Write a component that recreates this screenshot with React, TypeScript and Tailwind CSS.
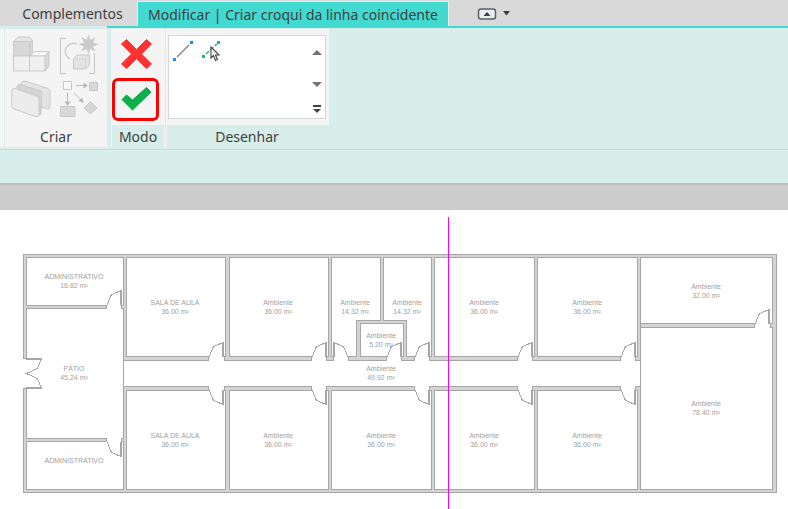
import type { ReactNode } from 'react';

type Box = [x: number, y: number, w: number, h: number];

const WALLS: Box[] = [
  // outer shell
  [23, 254, 754, 4],
  [23, 489, 754, 4],
  [23, 254, 4, 105],
  [23, 388, 4, 105],
  [772, 254, 5, 239],
  // administrativo
  [23, 305, 84, 4],
  [121, 305, 6, 4],
  [23, 438, 84, 4],
  [121, 438, 6, 4],
  // corridor, upper side
  [123, 356, 86, 5],
  [224, 356, 88, 5],
  [326, 356, 8, 5],
  [348, 356, 39, 5],
  [401, 356, 14, 5],
  [429, 356, 89, 5],
  [532, 356, 89, 5],
  [635, 356, 6, 5],
  // corridor, lower side
  [123, 386, 86, 5],
  [224, 386, 88, 5],
  [326, 386, 89, 5],
  [429, 386, 89, 5],
  [532, 386, 89, 5],
  [635, 386, 6, 5],
  // upper partitions
  [123, 254, 4, 107],
  [225, 254, 5, 107],
  [328, 254, 4, 107],
  [380, 254, 4, 70],
  [356, 320, 51, 4],
  [356, 320, 5, 41],
  [403, 320, 4, 41],
  [431, 254, 4, 107],
  [534, 254, 4, 107],
  [637, 254, 4, 107],
  // lower partitions
  [123, 386, 4, 107],
  [225, 386, 5, 107],
  [328, 386, 4, 107],
  [431, 386, 4, 107],
  [534, 386, 4, 107],
  [637, 386, 4, 107],
  // east rooms
  [640, 323, 115, 5],
  [770, 323, 7, 5],
];

interface DoorSpec {
  x: number;
  y: number;
  down?: boolean;
  mirror?: boolean;
}

const DOORS: DoorSpec[] = [
  { x: 107, y: 305 },
  { x: 107, y: 442, down: true },
  { x: 209, y: 357 },
  { x: 312, y: 357 },
  { x: 348, y: 357, mirror: true },
  { x: 387, y: 357 },
  { x: 415, y: 357 },
  { x: 518, y: 357 },
  { x: 621, y: 357 },
  { x: 755, y: 324 },
  { x: 209, y: 390, down: true },
  { x: 312, y: 390, down: true },
  { x: 415, y: 390, down: true },
  { x: 518, y: 390, down: true },
  { x: 621, y: 390, down: true },
];

const ROOMS: { x: number; y: number; name: string; area?: string }[] = [
  { x: 74, y: 279, name: 'ADMINISTRATIVO', area: '16.82 m²' },
  { x: 175, y: 305, name: 'SALA DE AULA', area: '36.00 m²' },
  { x: 278, y: 305, name: 'Ambiente', area: '36.00 m²' },
  { x: 355, y: 305, name: 'Ambiente', area: '14.32 m²' },
  { x: 407, y: 305, name: 'Ambiente', area: '14.32 m²' },
  { x: 484, y: 305, name: 'Ambiente', area: '36.00 m²' },
  { x: 587, y: 305, name: 'Ambiente', area: '36.00 m²' },
  { x: 706, y: 289, name: 'Ambiente', area: '32.00 m²' },
  { x: 381, y: 338, name: 'Ambiente', area: '5.20 m²' },
  { x: 381, y: 371, name: 'Ambiente', area: '49.92 m²' },
  { x: 74, y: 371, name: 'PÁTIO', area: '45.24 m²' },
  { x: 706, y: 406, name: 'Ambiente', area: '78.40 m²' },
  { x: 175, y: 438, name: 'SALA DE AULA', area: '36.00 m²' },
  { x: 278, y: 438, name: 'Ambiente', area: '36.00 m²' },
  { x: 381, y: 438, name: 'Ambiente', area: '36.00 m²' },
  { x: 484, y: 438, name: 'Ambiente', area: '36.00 m²' },
  { x: 587, y: 438, name: 'Ambiente', area: '36.00 m²' },
  { x: 74, y: 463, name: 'ADMINISTRATIVO' },
];

function Door({ x, y, down, mirror }: DoorSpec) {
  return (
    <g transform={`translate(${x} ${y}) scale(${mirror ? -1 : 1} ${down ? -1 : 1})`}>
      <path d="M0.5 0 L1.5 -4 L4.5 -10.5 L14 -14.5" fill="none" stroke="#a6a6a6" />
      <rect x="13" y="-15" width="2" height="15" fill="#a6a6a6" />
    </g>
  );
}

function FloorPlan() {
  return (
    <svg viewBox="0 210 788 299" className="block w-full" role="img" aria-label="Planta baixa">
      <g shapeRendering="crispEdges">
        {WALLS.map(([x, y, w, h], i) => (
          <rect key={i} x={x} y={y} width={w} height={h} fill="#a6a6a6" />
        ))}
        {WALLS.map(([x, y, w, h], i) => (
          <rect key={i} x={x + 1} y={y + 1} width={w - 2} height={h - 2} fill="#d4d4d4" />
        ))}
        <path d="M123.5 361V386M640.5 361V386" stroke="#a6a6a6" />
        {DOORS.map((d) => (
          <Door key={`${d.x}-${d.y}`} {...d} />
        ))}
        {/* entrance, double leaf */}
        <path d="M26 359H42M26 388H42" stroke="#a6a6a6" strokeWidth="2" />
        <path d="M41 360L37.5 368.5L26.5 373.5L37.5 378.5L41 387" fill="none" stroke="#a6a6a6" />
      </g>
      <g fill="#a0a0a0" fontSize="7" textAnchor="middle" fontFamily="'Liberation Sans', Arial, sans-serif">
        {ROOMS.map((r) => (
          <text key={`${r.x}-${r.y}`} x={r.x} y={r.y}>
            {r.name}
            {r.area && (
              <tspan x={r.x} dy="9">
                {r.area}
              </tspan>
            )}
          </text>
        ))}
      </g>
      <path d="M448.5 217V509" stroke="#ff00ff" shapeRendering="crispEdges" />
    </svg>
  );
}

function SolidIcon() {
  return (
    <svg width="40" height="40" viewBox="0 0 40 40" stroke="#cbcbcb" strokeLinejoin="round">
      <path d="M2.5 7.5L7 3H18.5L21.5 7L18.5 9Z" fill="#e4e4e4" />
      <path d="M18.5 8L21.5 7V18L18.5 22Z" fill="#d6d6d6" />
      <path d="M2.5 7.5H18.5V22H2.5Z" fill="#d8d8d8" />
      <path d="M18.5 22L24 17.5H38L34 22Z" fill="#f6f6f6" />
      <path d="M34 22L38 17.5V32L34 37Z" fill="#dadada" />
      <path d="M2.5 22H18.5V37H2.5ZM18.5 22H34V37H18.5Z" fill="#f0f0f0" />
    </svg>
  );
}

function ComponentIcon() {
  return (
    <svg width="40" height="40" viewBox="0 0 40 40" fill="none">
      <path d="M7 4.5H1.5V39.5H7" stroke="#c4c4c4" />
      <path d="M35.5 19V39.5H30" stroke="#c4c4c4" />
      <path d="M18 10A8 8 0 1 0 11 25" stroke="#d0d0d0" strokeWidth="1.5" />
      <path
        d="M29.5 0L31.3 5.8L36.5 3L34 8.4L39.5 10.3L34 12.4L36.8 17.5L31.4 15L29.5 20.5L27.6 15L22 17.5L25 12.4L19.5 10.3L25 8.4L22.4 3L27.7 5.8Z"
        fill="#cbcbcb"
      />
      <path d="M14.5 25L18 21H30.5V31L26.5 35H14.5Z" fill="#e4e4e4" stroke="#cacaca" strokeLinejoin="round" />
      <path d="M14.5 25H26.5V35M26.5 25L30.5 21" stroke="#d6d6d6" />
    </svg>
  );
}

function ViewsIcon() {
  return (
    <svg width="40" height="40" viewBox="0 0 40 40" stroke="#cacaca" strokeLinejoin="round">
      <path d="M10.5 5Q11 2.5 14 3L37 10.5Q39 11.5 39 13.5V29Q38.5 31.5 36 31L10.5 22Z" fill="#e4e4e4" />
      <path d="M5.5 9L8 6L31 13.500L30 36L27.500 37Z" fill="#d4d4d4" />
      <path d="M12 8V12M18 10V14M24 12V16M30 17H35V31" fill="none" stroke="#dedede" />
      <path d="M0.800 13Q1 10 4 10.500L25.500 18Q28 19 28 21V37Q27.500 39.500 25 38.700L3 31Q0.800 30 0.800 28Z" fill="#ececec" />
    </svg>
  );
}

function GroupIcon() {
  return (
    <svg width="40" height="40" viewBox="0 0 40 40">
      <path d="M4.500 3.500H12.500V11.500H4.500Z" fill="#f8f8f8" stroke="#c8c8c8" />
      <path d="M30.500 4.500H38.500V12.500H30.500ZM1.500 28.500H16V38.500H1.500Z" fill="#d8d8d8" stroke="#c8c8c8" />
      <path d="M31.500 23.500L38 30L31.500 36L25 30Z" fill="#d6d6d6" stroke="#cacaca" />
      <path d="M17 7.500H26M8.500 15V25M15 15L22 22" stroke="#bcbcbc" />
      <path d="M24.500 4.500L29 7.500L24.500 10.500ZM5.500 23.500H11.500L8.500 28ZM25 25L19.500 23L23 19.500Z" fill="#b8b8b8" />
    </svg>
  );
}

function IconButton({ label, className = '', children }: { label: string; className?: string; children: ReactNode }) {
  return (
    <button type="button" aria-label={label} className={`flex items-center justify-center ${className}`}>
      {children}
    </button>
  );
}

function CreatePanel() {
  return (
    <section className="ml-1 flex w-[103px] flex-col border-l border-[#d8eeeb] bg-[#f4f4f4]">
      <div className="grid grid-cols-[40px_40px] gap-x-2 gap-y-1 px-1.5 pt-[5px]">
        <IconButton label="Modelo"><SolidIcon /></IconButton>
        <IconButton label="Componente"><ComponentIcon /></IconButton>
        <IconButton label="Peças"><ViewsIcon /></IconButton>
        <IconButton label="Grupo"><GroupIcon /></IconButton>
      </div>
      <h2 className="mt-auto h-[22px] text-center leading-6">Criar</h2>
    </section>
  );
}

function ModePanel() {
  return (
    <section className="ml-1 flex w-[54px] flex-col border-x border-[#f4f4f4]">
      <div className="flex flex-1 flex-col bg-[#f4f4f4]">
        <IconButton label="Cancelar" className="h-[49px] w-[47px] pt-px pl-0.5">
          <svg width="31" height="32" viewBox="0 0 31 32">
            <path
              d="M5.500 1.500L15.500 11.500L25.500 1.500L30.500 6L20.500 16L30.500 26L25.500 30.500L15.500 20.500L5.500 30.500L0.500 26L10.500 16L0.500 6Z"
              fill="#ff3131"
              stroke="#f63030"
            />
          </svg>
        </IconButton>
        <IconButton label="Concluir" className="h-[43px] w-[47px] rounded-md border-3 border-[#ff0000] pl-0.5">
          <svg width="31" height="27" viewBox="0 0 31 27">
            <path d="M1 13.500L5.500 9L11.500 14L25.500 1.500L30 6L11.500 24Z" fill="#0bb04c" stroke="#0aa848" />
          </svg>
        </IconButton>
      </div>
      <h2 className="h-[22px] text-center leading-6">Modo</h2>
    </section>
  );
}

function DrawPanel() {
  return (
    <section className="ml-px flex w-[163px] flex-col border-l border-[#f4f4f4]">
      <div className="flex-1 bg-[#f4f4f4] px-px pt-1.5">
        <div className="flex h-[84px] w-[158px] border border-[#d6d6d6] bg-white">
          <div className="flex flex-1 items-start gap-1.5 px-1 pt-1">
            <IconButton label="Linha">
              <svg width="22" height="22" viewBox="0 0 22 22">
                <path d="M4 17L16 5" stroke="#858585" strokeWidth="1.500" />
                <path d="M0 18H3V21H0ZM17 1H20V4H17Z" fill="#1590e8" />
              </svg>
            </IconButton>
            <IconButton label="Selecionar linhas">
              <svg width="22" height="22" viewBox="0 0 22 22">
                <path d="M5 14L16 4" stroke="#18c077" strokeWidth="1.500" strokeDasharray="4 2" />
                <path d="M1 15H4V18H1ZM16 1H19V4H16Z" fill="#0fc26c" />
                <path
                  d="M10 7V18L12.500 15.500L14.500 20.500L16.500 19.500L14.500 15H18Z"
                  fill="#ffffff"
                  stroke="#4a4a4a"
                  strokeWidth="1.200"
                />
              </svg>
            </IconButton>
          </div>
          <div className="flex w-4 flex-col items-center">
            <IconButton label="Anterior" className="h-8">
              <svg width="12" height="7" viewBox="0 0 12 7"><path d="M1 6L6 1L11 6Z" fill="#737373" /></svg>
            </IconButton>
            <IconButton label="Próximo" className="h-8">
              <svg width="12" height="7" viewBox="0 0 12 7"><path d="M1 1L6 6L11 1Z" fill="#737373" /></svg>
            </IconButton>
            <IconButton label="Mais" className="flex-1">
              <svg width="10" height="8" viewBox="0 0 10 8"><path d="M1 0H9V2H1ZM1 4H9L5 8Z" fill="#444444" /></svg>
            </IconButton>
          </div>
        </div>
      </div>
      <h2 className="mr-0.5 h-[22px] text-center leading-6">Desenhar</h2>
    </section>
  );
}

export default function App() {
  return (
    <div className="bg-white font-['Noto_Sans',sans-serif] text-[14px] text-[#404040]">
      <nav className="flex h-[26px] bg-[#d9d9d9] pt-px">
        <button type="button" className="w-[137px] shrink-0 pl-2">
          Complementos
        </button>
        <button type="button" className="border-x border-t border-[#e6efee] bg-[#42d9d0] px-2.5 whitespace-nowrap">
          Modificar | Criar croqui da linha coincidente
        </button>
        <button type="button" aria-label="Minimizar faixa" className="ml-7 flex items-center gap-1.5">
          <svg width="20" height="12" viewBox="0 0 20 12">
            <rect x="1.500" y="1" width="17" height="10" rx="2.500" fill="#e8edf2" stroke="#5b6068" strokeWidth="1.500" />
            <path d="M6.500 8L10 4L13.500 8Z" fill="#3b3f46" />
          </svg>
          <svg width="7" height="5" viewBox="0 0 7 5"><path d="M0 0H7L3.500 4.500Z" fill="#3f3f3f" /></svg>
        </button>
      </nav>
      <div className="flex h-0.5 bg-[#42d9d0]">
        <div className="w-[107px] bg-[#d8eeeb]" />
      </div>

      <div className="flex h-[122px] border-b border-[#cfd8d7] bg-[#d8eeeb] pt-px pb-0.5">
        <div className="-mr-1 w-1 bg-[#f4f4f4]" />
        <CreatePanel />
        <ModePanel />
        <DrawPanel />
      </div>
      <div className="h-[35px] border-b-2 border-[#c0c0c0] bg-[#d8eeeb]" />
      <div className="h-[25px] bg-[#cdcdcd]" />

      <FloorPlan />
    </div>
  );
}
